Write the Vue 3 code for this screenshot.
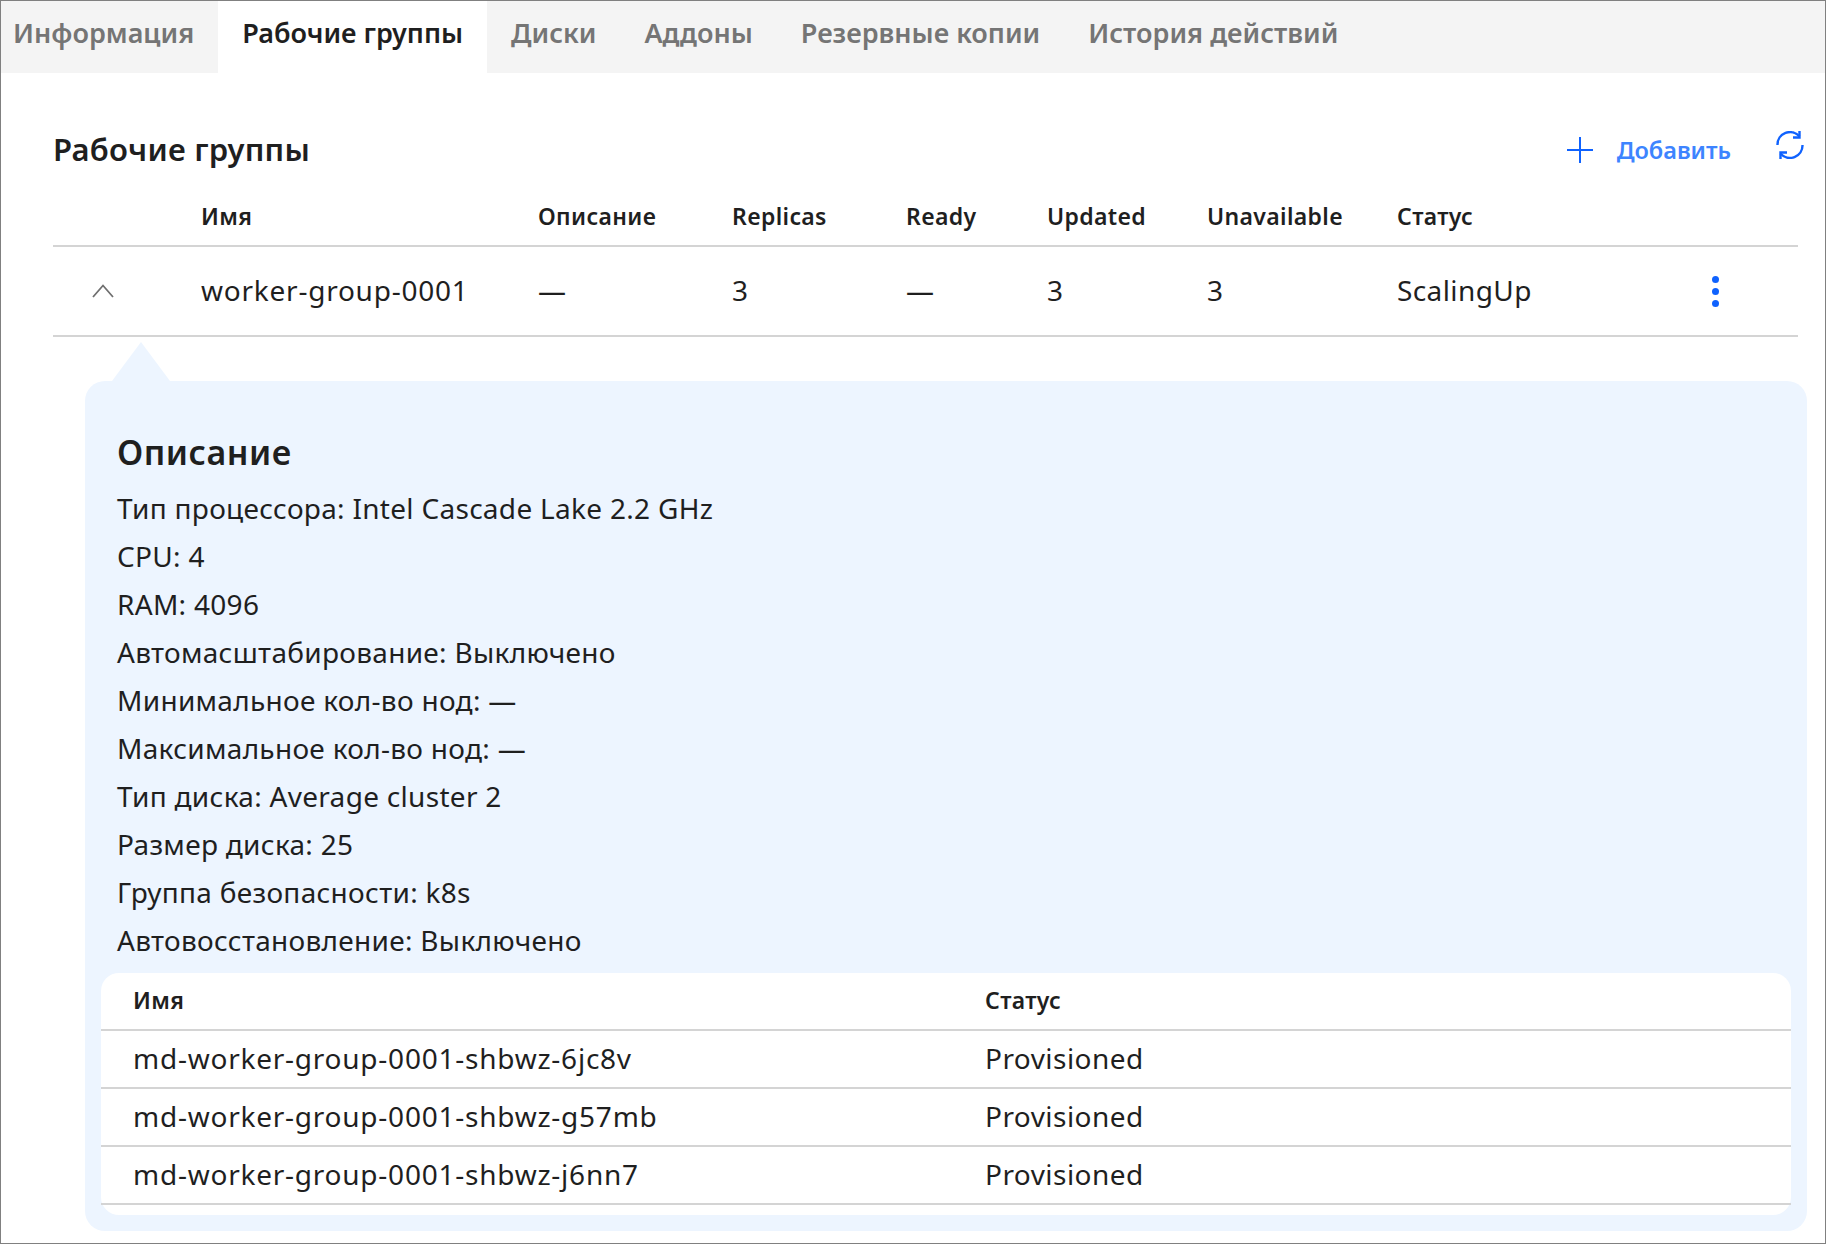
<template>
  <div class="page">
    <nav class="tabs">
      <a v-for="tab in tabs" :key="tab" class="tab" :class="{ active: tab === activeTab }">{{ tab }}</a>
    </nav>

    <main class="content">
      <header class="toolbar">
        <h2 class="title">Рабочие группы</h2>
        <div class="actions">
          <button class="add-btn">
            <svg width="26" height="26" viewBox="0 0 26 26" fill="none" stroke="#0f62fe" stroke-width="2">
              <path d="M13 0v26M0 13h26" />
            </svg>
            <span>Добавить</span>
          </button>
          <button class="refresh-btn">
            <svg width="28" height="28" viewBox="0 0 28 28" fill="none" stroke="#0f62fe" stroke-width="2.4">
              <path d="M1.500 14A12.500 12.500 0 0 1 23.500 5.500" />
              <path d="M23.500 0v6.500h-6.500" />
              <path d="M26.500 14A12.500 12.500 0 0 1 4.500 22.500" />
              <path d="M4.500 28v-6.500H11" />
            </svg>
          </button>
        </div>
      </header>

      <div class="row head-row">
        <div></div>
        <div v-for="col in columns" :key="col">{{ col }}</div>
        <div></div>
      </div>
      <div class="row group-row">
        <div class="chevron-cell">
          <svg width="22" height="14" viewBox="0 0 22 14" fill="none" stroke="#6f6f6f" stroke-width="1.8">
            <path d="M1 13L11 1.500 21 13" />
          </svg>
        </div>
        <div class="wide">worker-group-0001</div>
        <div>—</div>
        <div>3</div>
        <div>—</div>
        <div>3</div>
        <div>3</div>
        <div>ScalingUp</div>
        <div class="menu-cell">
          <span class="dot"></span><span class="dot"></span><span class="dot"></span>
        </div>
      </div>

      <section class="panel">
        <span class="arrow"></span>
        <h3 class="panel-title">Описание</h3>
        <p v-for="line in details" :key="line" class="detail">{{ line }}</p>

        <div class="machines">
          <div class="machine-row machine-head">
            <div>Имя</div>
            <div>Статус</div>
          </div>
          <div v-for="m in machines" :key="m" class="machine-row">
            <div class="wide">{{ m }}</div>
            <div>Provisioned</div>
          </div>
        </div>
      </section>
    </main>
  </div>
</template>

<script setup>
const activeTab = 'Рабочие группы'
const tabs = ['Информация', 'Рабочие группы', 'Диски', 'Аддоны', 'Резервные копии', 'История действий']
const columns = ['Имя', 'Описание', 'Replicas', 'Ready', 'Updated', 'Unavailable', 'Статус']
const details = [
  'Тип процессора: Intel Cascade Lake 2.2 GHz',
  'CPU: 4',
  'RAM: 4096',
  'Автомасштабирование: Выключено',
  'Минимальное кол-во нод: —',
  'Максимальное кол-во нод: —',
  'Тип диска: Average cluster 2',
  'Размер диска: 25',
  'Группа безопасности: k8s',
  'Автовосстановление: Выключено'
]
const machines = [
  'md-worker-group-0001-shbwz-6jc8v',
  'md-worker-group-0001-shbwz-g57mb',
  'md-worker-group-0001-shbwz-j6nn7'
]
</script>

<style scoped>
.page {
  box-sizing: border-box;
  width: 1826px;
  height: 1244px;
  border: 1px solid #808080;
  background: #fff;
  color: #1f1f1f;
  font-family: "Noto Sans", sans-serif;
  overflow: hidden;
}

.tabs {
  display: flex;
  height: 72px;
  background: #f4f4f4;
}

.tab {
  display: flex;
  align-items: center;
  box-sizing: border-box;
  height: 100%;
  padding: 0 24px 9px;
  font-size: 27px;
  font-weight: 600;
  color: #757575;
}

.tab:first-child {
  padding-left: 12px;
}

.tab.active {
  background: #fff;
  color: #1f1f1f;
}

.content {
  padding: 0 27px 0 52px;
}

.toolbar {
  display: flex;
  align-items: center;
  justify-content: space-between;
  height: 54px;
  margin-top: 50px;
  margin-bottom: 9px;
}

.title {
  margin: 0 0 2px;
  font-size: 31px;
  font-weight: 600;
  letter-spacing: 0.25px;
}

.actions {
  display: flex;
  align-items: center;
  gap: 45px;
  margin-right: -6px;
}

.add-btn,
.refresh-btn {
  display: flex;
  align-items: center;
  padding: 0;
  border: 0;
  background: none;
  font: inherit;
  cursor: pointer;
}

.add-btn {
  gap: 24px;
  font-size: 23.5px;
  font-weight: 600;
  color: #3d84ff;
}

.refresh-btn {
  margin-top: -11px;
}

.row {
  display: grid;
  grid-template-columns: 148px 337px 194px 174px 141px 160px 190px 303px 1fr;
  align-items: center;
  box-sizing: border-box;
  border-bottom: 2px solid #d4d4d4;
}

.head-row {
  height: 61px;
  font-size: 23px;
  font-weight: 600;
  letter-spacing: 0.35px;
}

.group-row {
  height: 90px;
  padding-bottom: 2px;
  font-size: 28px;
  letter-spacing: 0.4px;
}

.chevron-cell {
  display: flex;
  margin-top: 2px;
  padding-left: 39px;
}

.menu-cell {
  display: flex;
  flex-direction: column;
  gap: 5px;
  margin-top: 2px;
  margin-left: 12px;
}

.dot {
  width: 7px;
  height: 7px;
  border-radius: 50%;
  background: #0f62fe;
}

.panel {
  position: relative;
  box-sizing: border-box;
  height: 850px;
  margin: 44px -9px 0 32px;
  padding: 49px 16px 16px;
  border-radius: 20px;
  background: #edf5ff;
}

.arrow {
  position: absolute;
  left: 27px;
  top: -39px;
  width: 58px;
  height: 39px;
  background: #edf5ff;
  clip-path: polygon(50% 0, 100% 100%, 0 100%);
}

.panel-title {
  margin: 0 0 10px;
  padding-left: 16px;
  font-size: 34px;
  line-height: 44px;
  font-weight: 600;
  letter-spacing: 0.5px;
}

.detail {
  margin: 0;
  padding-left: 16px;
  font-size: 28px;
  line-height: 48px;
  letter-spacing: 0.3px;
}

.machines {
  box-sizing: border-box;
  height: 242px;
  margin-top: 9px;
  border-radius: 18px;
  background: #fff;
}

.machine-row {
  display: grid;
  grid-template-columns: 852px 1fr;
  align-items: center;
  box-sizing: border-box;
  height: 58px;
  padding-left: 32px;
  padding-bottom: 2px;
  border-bottom: 2px solid #d4d4d4;
  font-size: 28px;
  letter-spacing: 0.45px;
}

.machine-head {
  font-size: 23px;
  font-weight: 600;
  letter-spacing: 0.35px;
}

.wide {
  letter-spacing: 0.76px;
}
</style>
